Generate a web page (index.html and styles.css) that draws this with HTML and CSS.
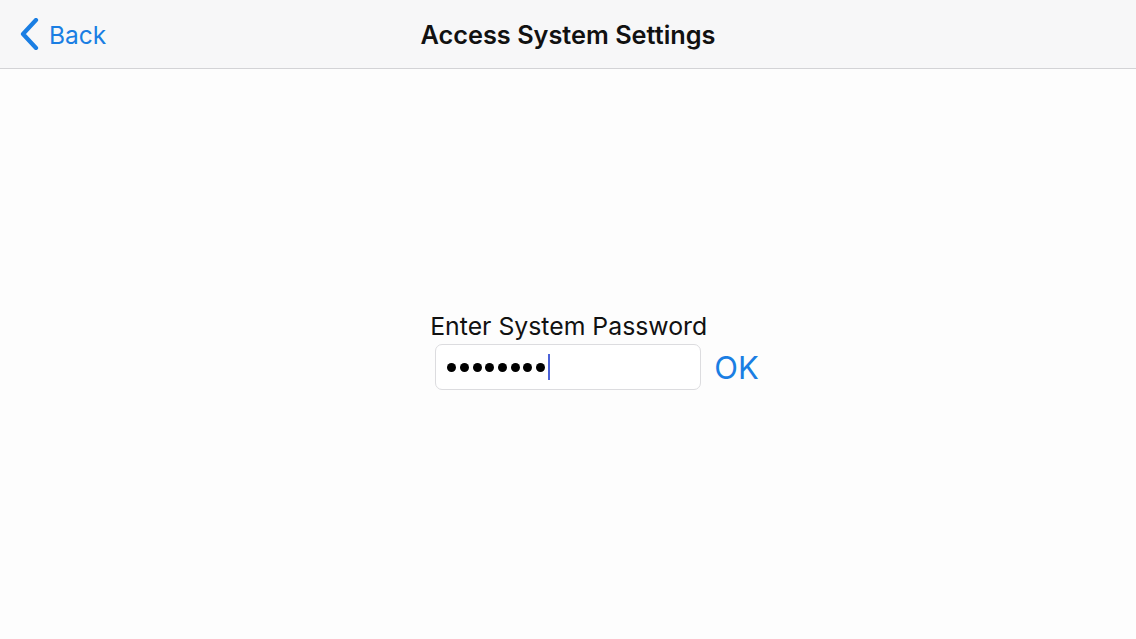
FILE: index.html
```html
<!DOCTYPE html>
<html lang="en">
<head>
    <meta charset="UTF-8">
    <meta name="viewport" content="width=device-width, initial-scale=1.0">
    <title>Access System Settings</title>
    <link rel="stylesheet" href="styles.css">
</head>
<body>

<!-- Nav bar -->
<div class="nav-bar">
    <a href="#" class="back-link">
        <svg class="back-chevron" width="22" height="32" viewBox="0 0 22 32">
            <path d="M18 2 L5 16 L18 30" fill="none" stroke="#1a7ee3" stroke-width="4.2" stroke-linecap="round" stroke-linejoin="round"/>
        </svg>
        <span>Back</span>
    </a>
    <h1 class="nav-title">Access System Settings</h1>
</div>

<!-- Password form -->
<div class="content">
    <div class="password-box">
        <label class="password-label">Enter System Password</label>
        <div class="password-row">
            <div class="password-field">
                <span class="dot"></span><span class="dot"></span><span class="dot"></span><span class="dot"></span>
                <span class="dot"></span><span class="dot"></span><span class="dot"></span><span class="dot"></span>
                <span class="caret"></span>
            </div>
            <button class="ok-button">OK</button>
        </div>
    </div>
</div>

</body>
</html>
```
FILE: styles.css
```css
*{
    box-sizing: border-box;
}
body {
    margin: 0;
    padding: 0;
    height: 100vh;
    background-color: #fdfdfd;
    font-family: "Inter", "Liberation Sans", sans-serif;
    color: #111;
}

/* Top bar */
.nav-bar {
    position: relative;
    height: 69px;
    background-color: #f7f7f8;
    border-bottom: 1px solid #d3d3d6;
    display: flex;
    align-items: center;
    justify-content: center;
}
.back-link {
    position: absolute;
    left: 18px;
    top: 18px;
    display: flex;
    align-items: center;
    gap: 9px;
    text-decoration: none;
    color: #1a7ee3;
    font-size: 24.5px;
}
.back-link span {
    margin-top: 2px;
}
.nav-title {
    margin: 0;
    font-size: 25.3px;
    font-weight: 600;
}

/* Password form */
.content {
    display: flex;
    justify-content: center;
    padding-top: 242px;
    padding-left: 58px;
}
.password-box {
    display: flex;
    flex-direction: column;
}
.password-label {
    font-size: 24.8px;
    line-height: 30px;
    margin-left: -5px;
}
.password-row {
    display: flex;
    align-items: center;
    gap: 13px;
    margin-top: 3px;
}
.password-field {
    width: 266px;
    height: 46px;
    border: 1px solid #dcdcdf;
    border-radius: 7px;
    background-color: #fff;
    display: flex;
    align-items: center;
    gap: 3.7px;
    padding-left: 11px;
}
.dot {
    width: 9px;
    height: 9px;
    border-radius: 50%;
    background-color: #000;
}
.caret {
    width: 2.5px;
    height: 26px;
    margin-left: -1px;
    background-color: #4b62d8;
}
.ok-button {
    border: none;
    background: none;
    padding: 0;
    font-family: inherit;
    font-size: 31px;
    color: #1a7ee3;
    cursor: pointer;
}
```
